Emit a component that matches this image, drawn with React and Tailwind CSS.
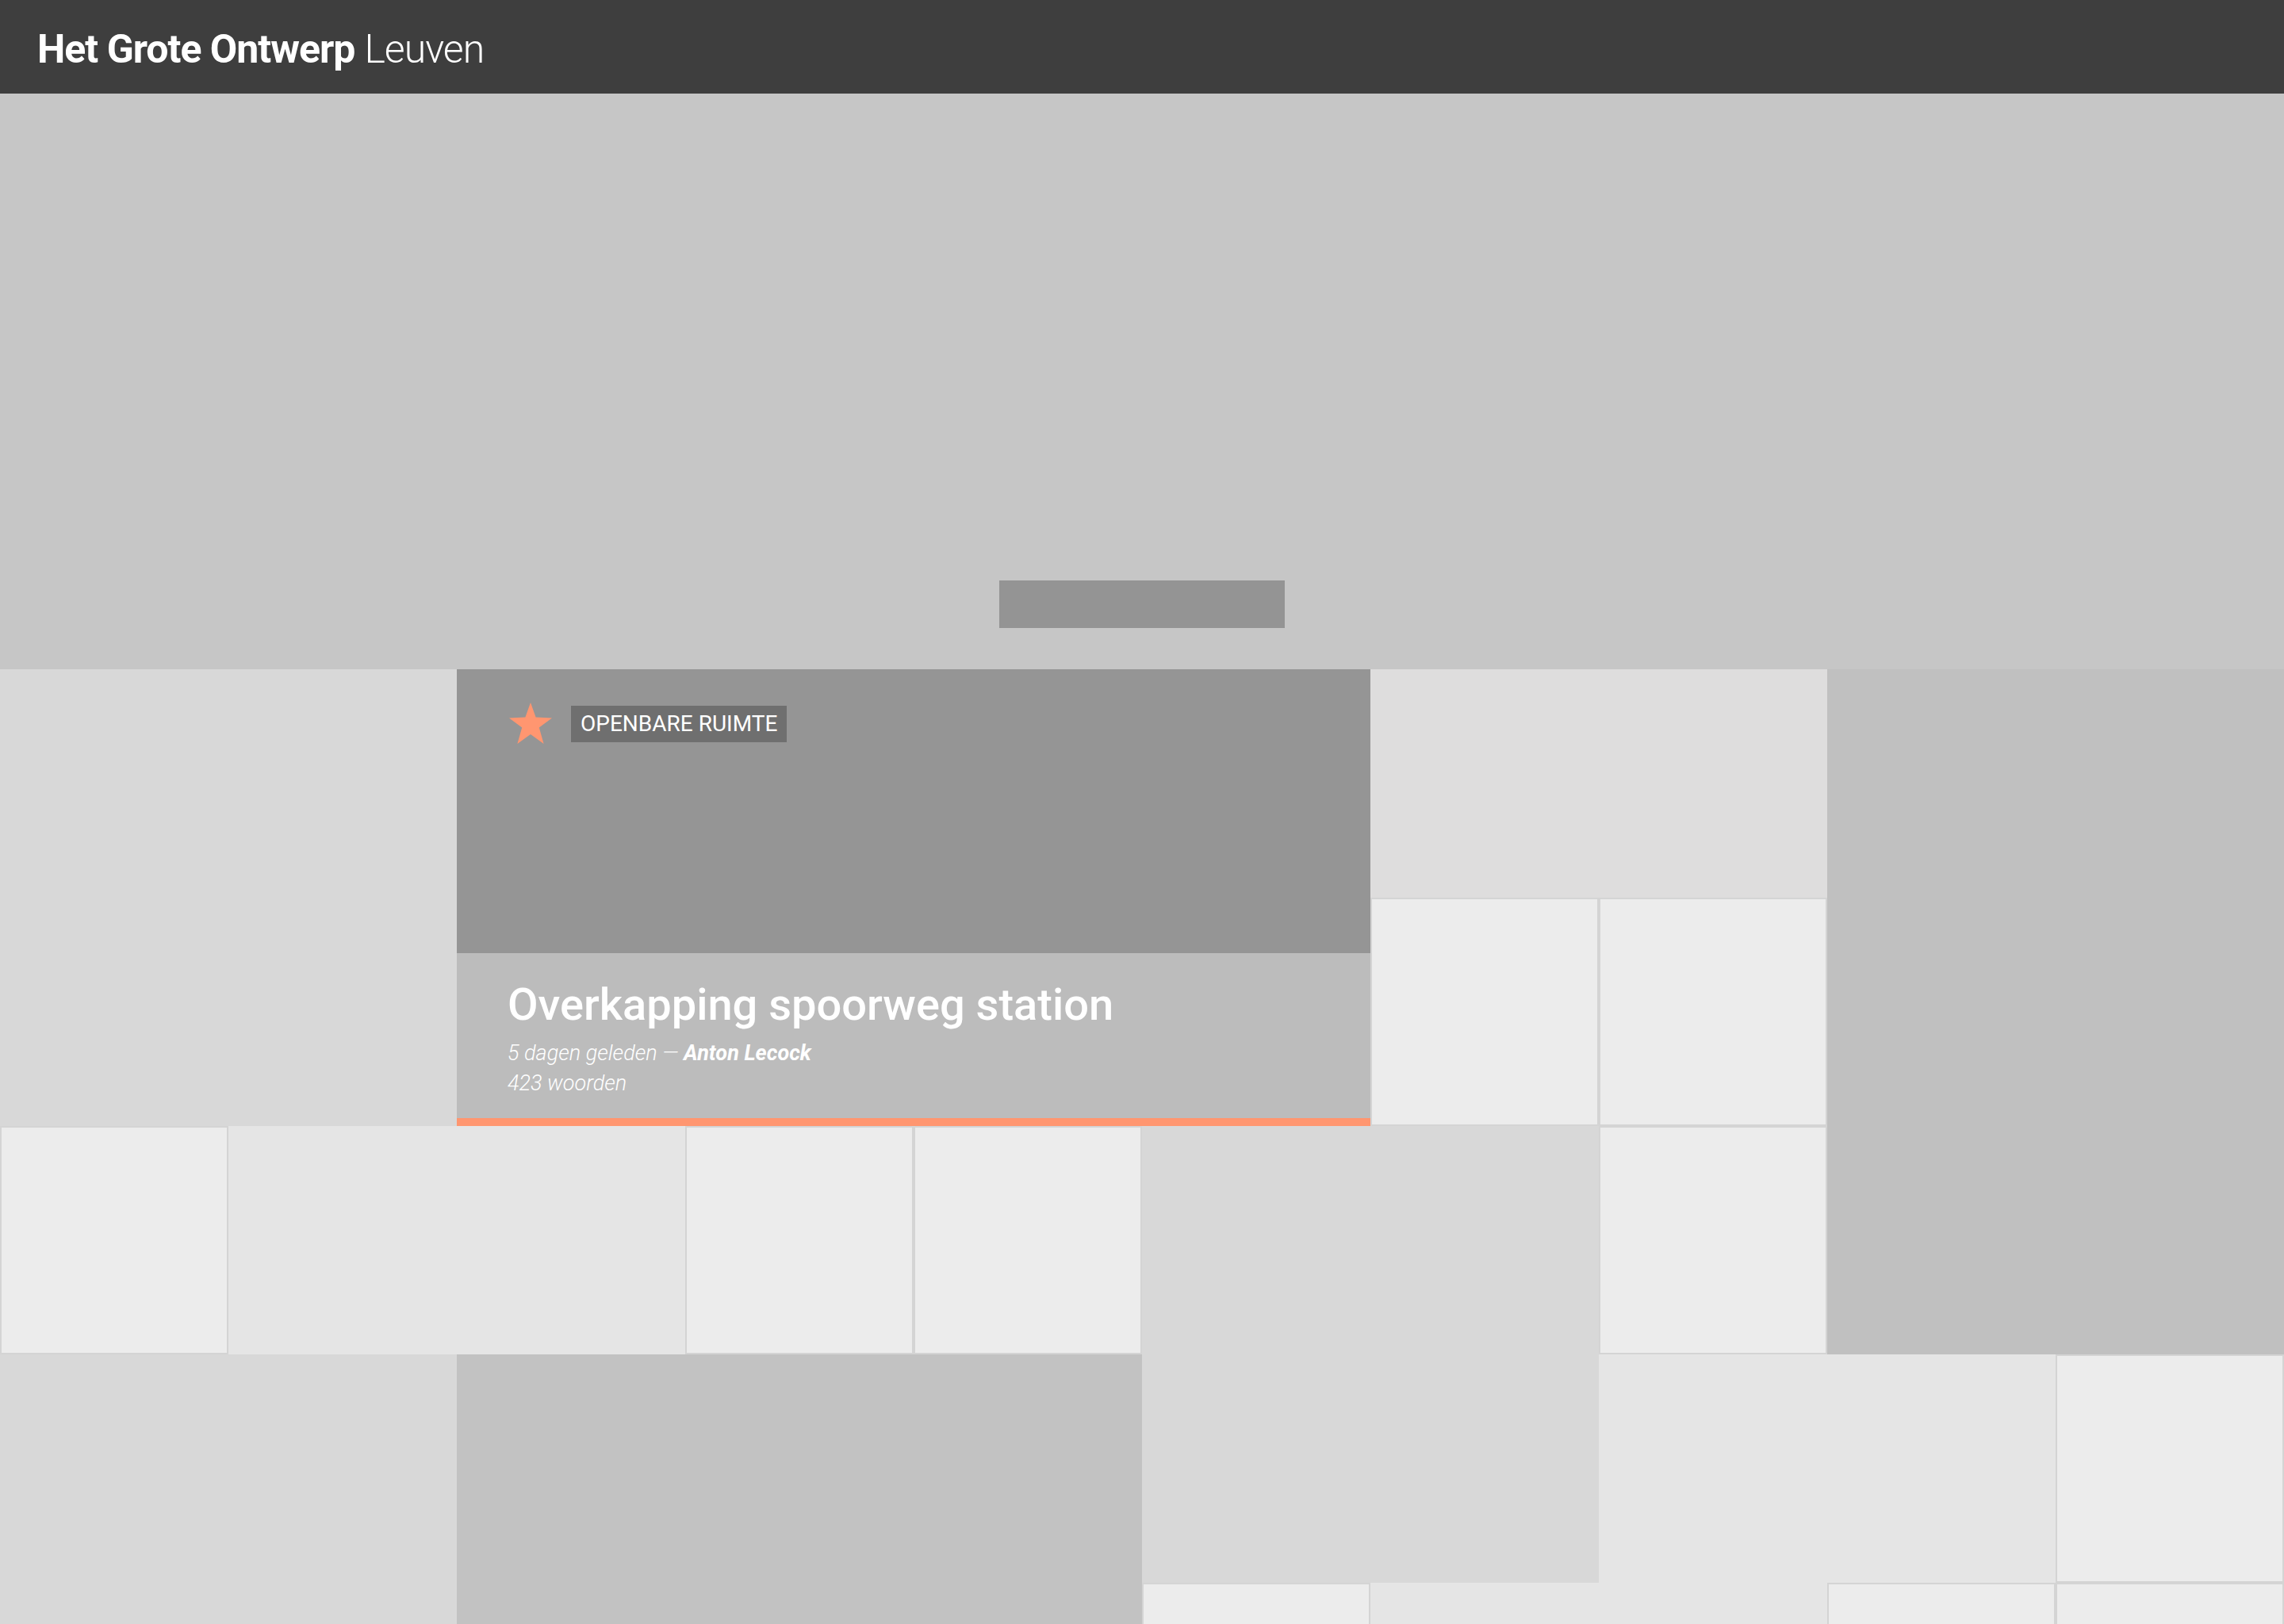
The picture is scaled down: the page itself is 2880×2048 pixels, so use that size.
const TILES = [
  { pos: "col-start-1 row-start-1 col-span-2 row-span-2", tone: "bg-[#d8d8d8]" },
  { pos: "col-start-7 row-start-1 col-span-2 row-span-1", tone: "bg-[#dedddd]" },
  { pos: "col-start-9 row-start-1 col-span-2 row-span-3", tone: "bg-[#c0c0c0]" },
  { pos: "col-start-7 row-start-2", small: true },
  { pos: "col-start-8 row-start-2", small: true },
  { pos: "col-start-1 row-start-3", small: true },
  { pos: "col-start-2 row-start-3 col-span-2 row-span-1", tone: "bg-[#e5e5e5]" },
  { pos: "col-start-4 row-start-3", small: true },
  { pos: "col-start-5 row-start-3", small: true },
  { pos: "col-start-6 row-start-3 col-span-2 row-span-2", tone: "bg-[#d8d8d8]" },
  { pos: "col-start-8 row-start-3", small: true },
  { pos: "col-start-1 row-start-4 col-span-2 row-span-2", tone: "bg-[#d8d8d8]" },
  { pos: "col-start-3 row-start-4 col-span-3 row-span-2", tone: "bg-[#c2c2c2]" },
  { pos: "col-start-8 row-start-4 col-span-2 row-span-1", tone: "bg-[#e5e5e5]" },
  { pos: "col-start-10 row-start-4", small: true },
  { pos: "col-start-6 row-start-5", small: true },
  { pos: "col-start-7 row-start-5 col-span-2 row-span-1", tone: "bg-[#e5e5e5]" },
  { pos: "col-start-9 row-start-5", small: true },
  { pos: "col-start-10 row-start-5", small: true },
];

function Star() {
  return (
    <svg width="54" height="52" viewBox="0 0 54 52" aria-hidden="true">
      <polygon
        points="27,0 33.6,18.5 54,19.4 37.8,31.6 43.6,52 27,40 10.4,52 16.2,31.6 0,19.4 20.4,18.5"
        fill="#ff9670"
      />
    </svg>
  );
}

function FeaturedCard() {
  return (
    <article className="col-start-3 row-start-1 col-span-4 row-span-2 flex flex-col">
      <div className="flex h-[358px] items-start gap-6 bg-[#959595] pl-[66px] pt-[42px]">
        <Star />
        <span className="mt-1 flex h-[46px] items-center bg-[#6f6f6f] px-[12px] text-[28px] text-white">
          OPENBARE RUIMTE
        </span>
      </div>
      <div className="flex flex-1 flex-col bg-[#bcbcbc] pl-[64px] pt-[31px] text-white">
        <h2 className="text-[56px] font-medium leading-[68px]">Overkapping spoorweg station</h2>
        <p className="mt-2 text-[27px] font-light italic leading-[38px]">
          5 dagen geleden — <span className="font-bold">Anton Lecock</span>
        </p>
        <p className="text-[27px] font-light italic leading-[38px]">423 woorden</p>
      </div>
      <div className="h-[10px] bg-[#ff9670]" />
    </article>
  );
}

export default function App() {
  return (
    <div className="h-screen overflow-hidden bg-[#d6d6d6] font-['Roboto',sans-serif]">
      <header className="flex h-[118px] items-center bg-[#3e3e3e] pl-[47px] pt-[7px] text-[50px] tracking-[-1px] text-white">
        <span className="font-bold">Het Grote Ontwerp</span>
        <span className="ml-[12px] font-light">Leuven</span>
      </header>

      <section className="flex h-[726px] items-end justify-center bg-[#c6c6c6] pb-[52px]">
        <div className="h-[60px] w-[360px] bg-[#949494]" />
      </section>

      <main className="grid grid-cols-10 grid-rows-[repeat(5,288px)]">
        <FeaturedCard />
        {TILES.map((tile, i) => (
          <div
            key={i}
            className={[
              tile.pos,
              tile.small ? "border-2 border-[#d4d4d4] bg-[#ececec]" : tile.tone,
            ].join(" ")}
          />
        ))}
      </main>
    </div>
  );
}
